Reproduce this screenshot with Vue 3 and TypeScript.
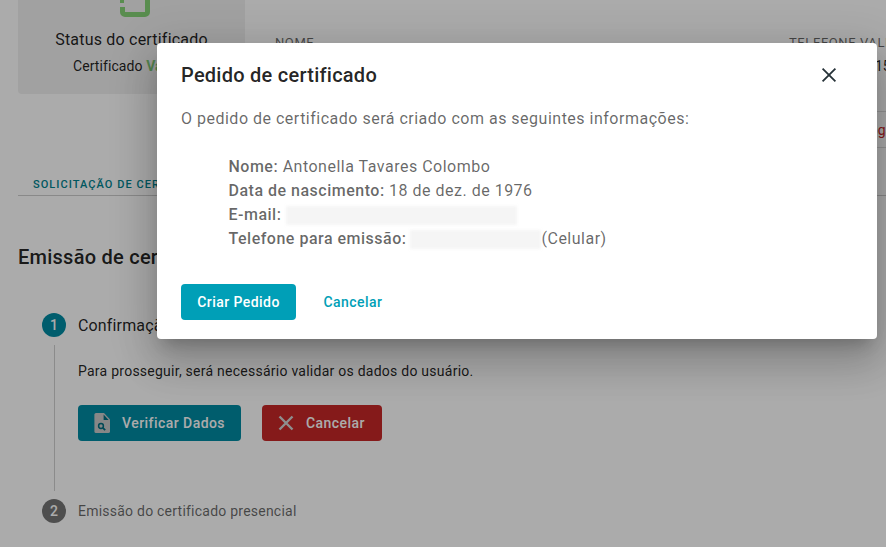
<script setup lang="ts">
const details = [
  { label: 'Nome:', value: 'Antonella Tavares Colombo' },
  { label: 'Data de nascimento:', value: '18 de dez. de 1976' },
]
</script>

<template>
  <div class="page">
    <div class="content">
      <section class="top">
        <div class="status-card">
          <svg class="status-icon" width="36" height="36" viewBox="0 0 36 36" fill="none">
            <path d="M7.5 23v5a2.5 2.5 0 0 0 2.5 2.5h20a2.5 2.5 0 0 0 2.5-2.5V0" stroke="#85d277" stroke-width="5" />
            <path d="M5 17.5h4" stroke="#85d277" stroke-width="3" />
          </svg>
          <div class="status-title">Status do certificado</div>
          <div class="status-sub">Certificado <b>Válido</b></div>
        </div>
        <div class="info">
          <div class="info-head">
            <span>NOME</span>
            <span class="phone-col">TELEFONE VALIDADO</span>
          </div>
          <div class="info-row">
            <span>Antonella</span>
            <span class="phone-val">15</span>
          </div>
          <div class="info-action"><span>Revogar</span></div>
        </div>
      </section>

      <div class="tabs"><span class="tab">SOLICITAÇÃO DE CERTIFICADO</span></div>

      <h2 class="section-title">Emissão de certificado</h2>

      <div class="step">
        <span class="num active">1</span>
        <span class="step-title">Confirmação de dados</span>
      </div>
      <div class="step-body">
        <p>Para prosseguir, será necessário validar os dados do usuário.</p>
        <div class="actions">
          <button class="btn teal">
            <svg width="24" height="24" viewBox="0 0 24 24">
              <path fill="#c9c9c9" d="M6 2h8l6 6.5V20.4A1.6 1.6 0 0 1 18.4 22H6a1.6 1.6 0 0 1-1.6-1.6V3.6A1.6 1.6 0 0 1 6 2z" />
              <path fill="#006e80" d="M13.6 3.6 18.6 9h-5z" />
              <circle cx="11" cy="15" r="2.4" fill="none" stroke="#006e80" stroke-width="1.5" />
              <path stroke="#006e80" stroke-width="1.8" d="m12.8 16.8 2.4 2.4" />
            </svg>
            Verificar Dados
          </button>
          <button class="btn red">
            <svg width="24" height="24" viewBox="0 0 24 24">
              <path stroke="#d4d4d4" stroke-width="2.4" d="m5.5 5.5 13 13m0-13-13 13" />
            </svg>
            Cancelar
          </button>
        </div>
      </div>
      <div class="step second">
        <span class="num muted">2</span>
        <span class="step-title small">Emissão do certificado presencial</span>
      </div>
    </div>

    <div class="overlay"></div>

    <div class="dialog" role="dialog">
      <header class="dialog-head">
        <h1>Pedido de certificado</h1>
        <svg width="24" height="24" viewBox="0 0 24 24">
          <path stroke="#263238" stroke-width="1.8" d="M5.6 5.6 18.4 18.4M18.4 5.6 5.6 18.4" />
        </svg>
      </header>
      <p class="lead">O pedido de certificado será criado com as seguintes informações:</p>
      <div class="details">
        <div v-for="d in details" :key="d.label"><b>{{ d.label }}</b> {{ d.value }}</div>
        <div class="line"><b>E-mail:</b><span class="redact mail"></span></div>
        <div class="line"><b>Telefone para emissão:</b><span class="redact tel"></span>(Celular)</div>
      </div>
      <footer class="dialog-foot">
        <button class="primary">Criar Pedido</button>
        <button class="text">Cancelar</button>
      </footer>
    </div>
  </div>
</template>

<style>
html, body { margin: 0; background: #fff; }
</style>

<style scoped>
* { box-sizing: border-box; }
.page {
  position: relative;
  width: 886px;
  height: 547px;
  overflow: hidden;
  background: #fff;
  font-family: Roboto, sans-serif;
  color: rgba(0, 0, 0, .87);
}
.content { padding: 0 0 0 18px; }
.top { display: flex; height: 148px; }
.status-card {
  width: 227px;
  height: 94px;
  background: #f0f0f0;
  border-radius: 0 0 4px 4px;
  display: flex;
  flex-direction: column;
  align-items: center;
  position: relative;
  padding-top: 30px;
}
.status-icon { position: absolute; top: -16px; left: 97px; }
.status-title { font-size: 16px; line-height: 20px; letter-spacing: .2px; }
.status-sub { font-size: 14px; line-height: 20px; margin-top: 6px; letter-spacing: .08px; align-self: flex-start; margin-left: 55px; white-space: nowrap; }
.status-sub b { color: #7cc576; font-weight: 700; }
.info { flex: 1; position: relative; min-width: 0; overflow: hidden; }
.info-head {
  display: flex;
  justify-content: space-between;
  padding: 35px 0 0 30px;
  height: 58px;
  font-size: 13px;
  color: rgba(0, 0, 0, .6);
  letter-spacing: .6px;
  white-space: nowrap;
}
.phone-col { position: absolute; left: 544px; }
.info-row {
  height: 54px;
  border-bottom: 1px solid #ddd;
  padding: 0 0 0 30px;
  font-size: 14px;
  white-space: nowrap;
}
.phone-val { position: absolute; left: 630px; top: 58px; }
.info-action {
  height: 36px;
  border-bottom: 1px solid #ddd;
  font-size: 14px;
  line-height: 36px;
  color: #c62828;
  white-space: nowrap;
  padding-left: 602px;
}
.tabs { height: 48px; border-bottom: 1px solid #ccc; display: flex; align-items: flex-end; padding: 0 0 3px 15px; }
.tab { font-size: 11px; line-height: 14px; letter-spacing: 1.05px; font-weight: 500; color: #00838f; white-space: nowrap; }
.section-title { margin: 48px 0 0; font-size: 20px; line-height: 26px; font-weight: 500; letter-spacing: .25px; }
.step { display: flex; align-items: center; gap: 12px; margin: 43px 0 0 24px; height: 24px; }
.num {
  width: 24px; height: 24px; border-radius: 50%;
  display: flex; align-items: center; justify-content: center;
  color: #fff; font-size: 14px; font-weight: 500;
}
.num.active { background: #008ba3; }
.num.muted { background: #757575; }
.step-title { font-size: 16px; letter-spacing: .15px; }
.step-title.small { font-size: 14px; color: rgba(0, 0, 0, .6); letter-spacing: .23px; }
.step-body {
  margin: 8px 0 0 36px;
  height: 146px;
  padding: 16px 0 0 23px;
  border-left: 1px solid #d0d0d0;
}
.step-body p { margin: 0; font-size: 14px; line-height: 20px; letter-spacing: .25px; }
.actions { display: flex; gap: 21px; margin-top: 24px; }
.btn {
  height: 36px; border: 0; border-radius: 4px; color: #fff;
  font: 500 14px Roboto, sans-serif; letter-spacing: .45px;
  display: flex; align-items: center; gap: 8px; white-space: nowrap;
}
.btn.teal { width: 163px; background: #008ba3; padding: 0 0 1px 12px; }
.btn.red { width: 120px; background: #c62828; padding: 0 0 1px 12px; }
.step.second { margin-top: 8px; }
.overlay { position: absolute; inset: 0; background: rgba(0, 0, 0, .33); }
.dialog {
  position: absolute;
  left: 157px;
  top: 43px;
  width: 720px;
  height: 296px;
  background: #fff;
  border-radius: 4px;
  box-shadow: 0 11px 15px -7px rgba(0,0,0,.2), 0 24px 38px 3px rgba(0,0,0,.14), 0 9px 46px 8px rgba(0,0,0,.12);
  padding: 20px 36px 0 24px;
}
.dialog-head { display: flex; justify-content: space-between; align-items: center; height: 24px; }
.dialog-head h1 { margin: 0; font-size: 20px; font-weight: 500; letter-spacing: .25px; color: rgba(0, 0, 0, .87); }
.lead { margin: 20px 0 0; font-size: 16px; line-height: 24px; letter-spacing: .5px; color: rgba(0, 0, 0, .6); }
.details { margin: 24px 0 0 47.5px; font-size: 16px; line-height: 24px; letter-spacing: .5px; color: rgba(0, 0, 0, .6); }
.details b { font-weight: 500; }
.line { display: flex; align-items: center; }
.redact { display: block; height: 19px; background: #f5f5f5; filter: blur(1.5px); margin-left: 5px; }
.redact.mail { width: 231px; }
.redact.tel { width: 131px; margin-left: 4px; margin-right: 0; }
.dialog-foot { display: flex; align-items: center; gap: 8px; margin-top: 33px; }
.primary, .text {
  height: 36px; border: 0; border-radius: 4px;
  font: 500 14px Roboto, sans-serif; letter-spacing: .45px;
}
.primary { width: 115px; background: #009fb7; color: #fff; }
.text { width: 98px; background: none; color: #009fb7; }
</style>
